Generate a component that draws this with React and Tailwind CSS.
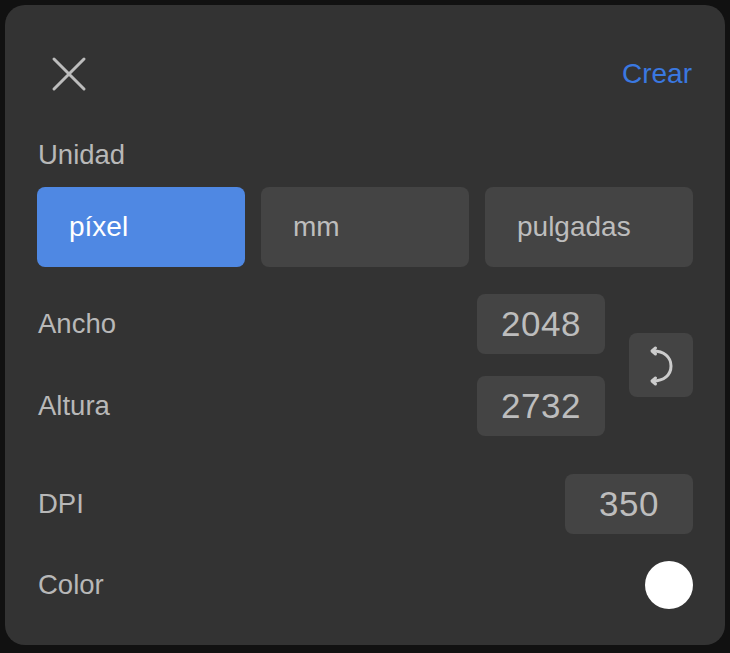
const font = { fontFamily: '"Liberation Sans", Arial, sans-serif' };

function UnitButton({ label, active }) {
  return (
    <button
      className={
        active
          ? "flex h-20 w-[208px] items-center rounded-lg bg-[#4f88e3] pl-8 text-[28px] text-white"
          : "flex h-20 w-[208px] items-center rounded-lg bg-[#444444] pl-8 text-[28px] text-[#bdbdbd]"
      }
    >
      {label}
    </button>
  );
}

function ValueBox({ value }) {
  return (
    <div className="flex h-[60px] w-32 items-center justify-center rounded-lg bg-[#444444] text-[35px] tracking-[0.5px] text-[#bdbdbd]">
      {value}
    </div>
  );
}

function Label({ children }) {
  return <span className="ml-px text-[27.5px] text-[#b8b8b8]">{children}</span>;
}

export default function App() {
  return (
    <div className="h-[653px] w-[730px] bg-[#111111] pl-[5px] pt-[5px]" style={font}>
      <div className="flex h-[640px] w-[720px] flex-col rounded-[20px] bg-[#333333] pl-8 pr-8">
        {/* Header */}
        <div className="flex h-[128px] items-center justify-between pt-[9px]">
          <svg width="48" height="48" viewBox="0 0 48 48" className="ml-[8px]" fill="none">
            <path d="M9 9 L39 39 M39 9 L9 39" stroke="#bdbdbd" strokeWidth="3" strokeLinecap="round" />
          </svg>
          <button className="mr-px text-[28px] text-[#3a78e0]">Crear</button>
        </div>

        <div className="mt-1.5 flex h-8 items-center">
          <Label>Unidad</Label>
        </div>
        <div className="mt-4 flex gap-4">
          <UnitButton label="píxel" active />
          <UnitButton label="mm" />
          <UnitButton label="pulgadas" />
        </div>

        {/* Width / height */}
        <div className="mt-[27px] flex items-center justify-between">
          <div className="flex flex-1 flex-col gap-[22px]">
            <div className="flex items-center justify-between">
              <Label>Ancho</Label>
              <ValueBox value="2048" />
            </div>
            <div className="flex items-center justify-between">
              <Label>Altura</Label>
              <ValueBox value="2732" />
            </div>
          </div>
          <button className="ml-6 flex h-16 w-16 items-center justify-center rounded-lg bg-[#444444]">
            <svg width="40" height="48" viewBox="0 0 40 48" fill="none">
              <path d="M12 10 C23 10 30 16 30 25 C30 34 23 40 12 40" stroke="#cccccc" strokeWidth="3" strokeLinecap="round" />
              <path d="M14.500 7 L11 10 L14.500 13 M14.500 37 L11 40 L14.500 43" stroke="#cccccc" strokeWidth="3" strokeLinecap="round" strokeLinejoin="round" />
            </svg>
          </button>
        </div>

        <div className="mt-[38px] flex items-center justify-between">
          <Label>DPI</Label>
          <ValueBox value="350" />
        </div>

        <div className="mt-[27px] flex items-center justify-between">
          <Label>Color</Label>
          <div className="h-12 w-12 rounded-full bg-white" />
        </div>
      </div>
    </div>
  );
}
